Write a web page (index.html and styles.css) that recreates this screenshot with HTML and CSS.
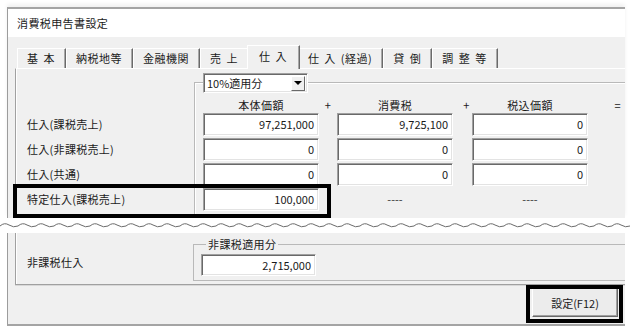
FILE: index.html
```html
<!DOCTYPE html>
<html>

<head>
  <meta charset="utf-8">
  <title>消費税申告書設定</title>
  <link rel="stylesheet" href="styles.css">
</head>

<body>
  <div class="win win-top">
    <div class="titlebar">消費税申告書設定</div>

    <div class="tabs">
      <div class="tab">基 本</div>
      <div class="tab">納税地等</div>
      <div class="tab">金融機関</div>
      <div class="tab">売 上</div>
      <div class="tab active">仕 入</div>
      <div class="tab">仕 入 (経過)</div>
      <div class="tab">貸 倒</div>
      <div class="tab">調 整 等</div>
    </div>

    <div class="page">
      <div class="grid">
        <div class="groupline"></div>
        <div class="combo">
          <span class="combo-text">10%適用分</span>
          <span class="combo-btn"><span class="arrow"></span></span>
        </div>

        <div class="head c1">本体価額</div>
        <div class="head g1">+</div>
        <div class="head c2">消費税</div>
        <div class="head g2">+</div>
        <div class="head c3">税込価額</div>
        <div class="head eq">=</div>

        <div class="label r1">仕入(課税売上)</div>
        <div class="field r1 c1">97,251,000</div>
        <div class="field r1 c2">9,725,100</div>
        <div class="field r1 c3">0</div>

        <div class="label r2">仕入(非課税売上)</div>
        <div class="field r2 c1">0</div>
        <div class="field r2 c2">0</div>
        <div class="field r2 c3">0</div>

        <div class="label r3">仕入(共通)</div>
        <div class="field r3 c1">0</div>
        <div class="field r3 c2">0</div>
        <div class="field r3 c3">0</div>

        <div class="label r4">特定仕入(課税売上)</div>
        <div class="field r4 c1">100,000</div>
        <div class="dash r4 c2">----</div>
        <div class="dash r4 c3">----</div>
      </div>
    </div>

    <div class="mark mark-row"></div>
  </div>

  <div class="cut">
    <svg width="630" height="8" viewBox="0 0 630 8">
      <defs>
        <pattern id="wave" width="18" height="8" patternUnits="userSpaceOnUse">
          <path d="M0 5 Q4.5 1 9 4 T18 5" fill="none" stroke="#6a6a6a" stroke-width="1"/>
        </pattern>
      </defs>
      <rect x="0" y="0" width="630" height="8" fill="url(#wave)"/>
    </svg>
  </div>

  <div class="win win-bottom">
    <div class="page page-low">
      <div class="label-low">非課税仕入</div>
      <fieldset class="group">
        <legend>非課税適用分</legend>
        <div class="field field-low">2,715,000</div>
      </fieldset>
    </div>
    <div class="footer">
      <button type="button" class="btn">設定(F12)</button>
    </div>
    <div class="mark mark-btn"></div>
  </div>
</body>

</html>
```

FILE: styles.css
```css
body {
  margin: 0;
  background-color: #fff;
  font-family: "Noto Sans CJK JP", "Noto Sans", sans-serif;
  font-size: 11px;
  color: #1a1a1a;
}

.win {
  position: relative;
  margin-left: 7px;
  width: 618px;
  box-sizing: border-box;
  border-left: 1px solid #9c9c9c;
  background-color: #f0f0f0;
}

.win-top {
  margin-top: 7px;
  border-top: 2px solid #a4a4a4;
  box-shadow: 0 -3px 4px rgba(0, 0, 0, 0.06);
}

.titlebar {
  height: 28px;
  line-height: 28px;
  padding-left: 9px;
  background-color: #fff;
  letter-spacing: 0.4px;
}

/* tab strip */
.tabs {
  display: flex;
  align-items: flex-end;
  height: 31px;
  padding-left: 9px;
}

.tab {
  height: 20px;
  line-height: 19px;
  box-sizing: border-box;
  padding: 0 10px 0 9px;
  border-top: 1px solid #fff;
  border-left: 1px solid #fff;
  border-right: 1px solid #6a6a6a;
  box-shadow: inset -1px 0 0 #a8a8a8;
  letter-spacing: 0.5px;
  word-spacing: 2px;
  white-space: nowrap;
}

.tab.active {
  position: relative;
  z-index: 1;
  height: 24px;
  line-height: 21px;
  margin: 0 -2px -1px -2px;
  padding: 0 12px 0 11px;
  background-color: #f0f0f0;
}

/* tab page */
.page {
  margin-left: 7px;
  border-top: 1px solid #fff;
  border-left: 1px solid #a0a0a0;
  box-shadow: inset 1px 0 0 #fff;
}

.grid {
  display: grid;
  grid-template-columns: 178px 9px 116px 18px 116px 19px 116px 1fr;
  grid-template-rows: 20px 20px 25px 25px 25px 25px;
  padding: 4px 0 5px 0;
}

.groupline {
  grid-column: 2 / -1;
  grid-row: 1 / -1;
  margin-top: 9px;
  margin-bottom: -5px;
  border-top: 1px solid #b9b9b9;
  border-left: 1px solid #b9b9b9;
  box-shadow: inset 1px 1px 0 #fff;
}

.combo {
  grid-column: 3;
  grid-row: 1;
  position: relative;
  display: flex;
  align-items: center;
  justify-content: space-between;
  width: 105px;
  height: 20px;
  box-sizing: border-box;
  background-color: #fff;
  border-top: 1px solid #a0a0a0;
  border-left: 1px solid #a0a0a0;
  border-right: 1px solid #fff;
  border-bottom: 1px solid #fff;
  box-shadow: inset 1px 1px 0 #696969, inset -1px -1px 0 #e3e3e3;
  padding: 0 2px 0 3px;
}

.combo-btn {
  display: flex;
  align-items: center;
  justify-content: center;
  width: 14px;
  height: 15px;
  box-sizing: border-box;
  background-color: #f0f0f0;
  border-top: 1px solid #fff;
  border-left: 1px solid #fff;
  border-right: 1px solid #696969;
  border-bottom: 1px solid #696969;
}

.arrow {
  width: 0;
  height: 0;
  border-left: 4px solid transparent;
  border-right: 4px solid transparent;
  border-top: 4px solid #000;
}

.head {
  grid-row: 2;
  align-self: end;
  line-height: 16px;
  text-align: center;
  letter-spacing: 0.4px;
}

.r1 { grid-row: 3; }
.r2 { grid-row: 4; }
.r3 { grid-row: 5; }
.r4 { grid-row: 6; }

.c1 { grid-column: 3; }
.g1 { grid-column: 4; }
.c2 { grid-column: 5; }
.g2 { grid-column: 6; padding-left: 8px; }
.c3 { grid-column: 7; }
.eq { grid-column: 8; text-align: right; padding-right: 4px; }

.label {
  grid-column: 1;
  padding-left: 11px;
  line-height: 23px;
  letter-spacing: 0.3px;
}

.field {
  height: 23px;
  box-sizing: border-box;
  background-color: #fff;
  border-top: 1px solid #a0a0a0;
  border-left: 1px solid #a0a0a0;
  border-right: 1px solid #fff;
  border-bottom: 1px solid #fff;
  box-shadow: inset 1px 1px 0 #696969, inset -1px -1px 0 #e3e3e3;
  text-align: right;
  padding-right: 4px;
  line-height: 21px;
}

.dash {
  line-height: 23px;
  text-align: center;
  color: #333;
}

/* annotation boxes */
.mark {
  position: absolute;
  box-sizing: border-box;
  border: 4px solid #000;
  z-index: 2;
}

.mark-row {
  left: 5px;
  top: 175px;
  width: 318px;
  height: 34px;
}

.mark-btn {
  left: 518px;
  top: 52px;
  width: 97px;
  height: 38px;
}

/* cut line */
.cut {
  height: 15px;
  padding-top: 3px;
  box-sizing: border-box;
}

.cut svg {
  display: block;
}

/* lower part */
.win-bottom {
  border-bottom: 2px solid #a4a4a4;
}

.page-low {
  display: flex;
  padding: 4px 0 3px 0;
  border-top: none;
  border-bottom: 1px solid #a0a0a0;
  box-shadow: inset 1px 0 0 #fff, 0 1px 0 #d8d8d8;
}

.label-low {
  width: 177px;
  box-sizing: border-box;
  padding-left: 11px;
  padding-top: 17px;
  letter-spacing: 0.3px;
}

.group {
  flex: 1;
  margin: 0;
  padding: 0 0 4px 7px;
  border: 1px solid #b9b9b9;
  border-right: none;
  min-width: 0;
}

.group legend {
  padding: 0 2px;
  margin-left: 5px;
  line-height: 14px;
  letter-spacing: 0.4px;
}

.field-low {
  width: 115px;
  height: 22px;
  margin-top: 3px;
  line-height: 20px;
}

.footer {
  display: flex;
  justify-content: flex-end;
  padding: 3px 7px 7px 0;
}

.btn {
  width: 86px;
  height: 29px;
  font-family: "Noto Sans CJK JP", "Noto Sans", sans-serif;
  font-size: 11px;
  color: #1a1a1a;
  background-color: #ececec;
  border-top: 1px solid #fff;
  border-left: 1px solid #fff;
  border-right: 1px solid #696969;
  border-bottom: 1px solid #696969;
  box-shadow: inset -1px -1px 0 #a0a0a0;
  padding: 0;
}
```
